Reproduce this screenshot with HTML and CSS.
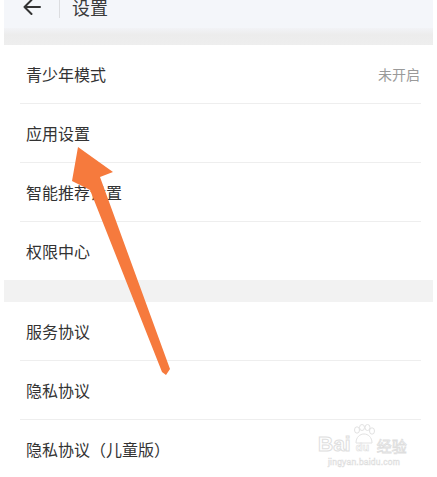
FILE: index.html
```html
<!DOCTYPE html>
<html lang="zh-CN">
<head>
    <meta charset="UTF-8">
    <meta name="viewport" content="width=device-width, initial-scale=1.0">
    <title>设置</title>
    <link rel="stylesheet" href="styles.css">
</head>
<body>

<div class="page">
    <!-- Top bar -->
    <div class="topbar">
        <svg class="back" width="20" height="18" viewBox="0 0 20 18">
            <path d="M18 9 H2.5 M9.5 2 L2.5 9 L9.5 16" fill="none" stroke="#333" stroke-width="2" stroke-linecap="round" stroke-linejoin="round"/>
        </svg>
        <span class="bar-sep"></span>
        <span class="title">设置</span>
    </div>
    <div class="topbar-shadow"></div>

    <!-- First group -->
    <div class="group">
        <div class="row"><span>青少年模式</span><span class="value">未开启</span></div>
        <div class="row"><span>应用设置</span></div>
        <div class="row"><span>智能推荐设置</span></div>
        <div class="row"><span>权限中心</span></div>
    </div>

    <div class="spacer"></div>

    <!-- Second group -->
    <div class="group">
        <div class="row"><span>服务协议</span></div>
        <div class="row"><span>隐私协议</span></div>
        <div class="row"><span>隐私协议（儿童版）</span></div>
    </div>
</div>

<!-- Annotation arrow over the list -->
<svg class="pointer" width="437" height="477" viewBox="0 0 437 477">
    <polygon points="78,147 113,172 100,177 170,369 166,375 162,372 90,190 72,181" fill="#f67a3d"/>
</svg>

<!-- Watermark -->
<div class="watermark">
    <div class="wm-logo">
        <span class="wm-bai">Bai</span>
        <span class="wm-paw">
            <svg width="26" height="22" viewBox="0 0 26 22">
                <g fill="none" stroke="#e2e2e2" stroke-width="1">
                    <ellipse cx="6" cy="6" rx="2.5" ry="3.2"/>
                    <ellipse cx="11" cy="3.5" rx="2.5" ry="3"/>
                    <ellipse cx="16.5" cy="3.5" rx="2.5" ry="3"/>
                    <ellipse cx="21" cy="7" rx="2.5" ry="3.2"/>
                    <path d="M5 19 C5 13 9 10 13 10 C17 10 21 13 21 19 Z"/>
                </g>
            </svg>
            <span class="wm-du">du</span>
        </span>
        <span class="wm-jy">经验</span>
    </div>
    <div class="wm-url">jingyan.baidu.com</div>
</div>

</body>
</html>
```

FILE: styles.css
```css
body {
    margin: 0;
    background-color: #fff;
    font-family: "Noto Sans CJK SC", "Noto Sans", sans-serif;
    color: #333;
    overflow: hidden;
    position: relative;
    width: 437px;
    height: 477px;
}
.page {
    margin: -14px 4px 0 4px;
}
.topbar {
    height: 42px;
    background-color: #f4f6fa;
    display: flex;
    align-items: center;
    padding-left: 18px;
}
.back {
    display: block;
}
.bar-sep {
    width: 1px;
    height: 22px;
    background-color: #dcdde0;
    margin-left: 17px;
}
.title {
    font-size: 18px;
    margin-left: 12px;
    color: #3a3a3a;
}
.topbar-shadow {
    height: 17px;
    background: linear-gradient(#f2f3f6, #ececec 40%, #eeeeee);
}
.group {
    background-color: #fff;
}
.row {
    height: 58px;
    margin: 0 12px 0 16px;
    padding: 0 1px 0 6px;
    border-bottom: 1px solid #eeeeee;
    display: flex;
    align-items: center;
    justify-content: space-between;
    font-size: 16px;
}
.row:last-child {
    border-bottom: none;
}
.value {
    font-size: 14px;
    color: #9a9a9a;
}
.spacer {
    height: 22px;
    background-color: #f2f2f2;
}
.pointer {
    position: absolute;
    left: 0;
    top: 0;
}
.watermark {
    position: absolute;
    left: 318px;
    top: 424px;
    width: 92px;
    color: #fff;
    text-align: center;
}
.wm-logo {
    display: flex;
    align-items: flex-end;
    height: 30px;
}
.wm-bai {
    font-family: "Liberation Sans", sans-serif;
    font-size: 21px;
    font-weight: bold;
    line-height: 1;
    -webkit-text-stroke: 1px #dedede;
}
.wm-paw {
    position: relative;
    width: 26px;
    height: 30px;
}
.wm-paw svg {
    position: absolute;
    left: 0;
    top: 0;
}
.wm-du {
    position: absolute;
    left: 5px;
    bottom: 1px;
    font-family: "Liberation Sans", sans-serif;
    font-size: 11px;
    font-weight: bold;
    -webkit-text-stroke: 0.6px #dedede;
}
.wm-jy {
    font-size: 15px;
    line-height: 1;
    -webkit-text-stroke: 0.8px #dedede;
    margin-bottom: 1px;
}
.wm-url {
    font-family: "Liberation Sans", sans-serif;
    font-size: 8.5px;
    margin-top: 3px;
    color: #fff;
    -webkit-text-stroke: 0.5px #dcdcdc;
    letter-spacing: 0.2px;
}
```
